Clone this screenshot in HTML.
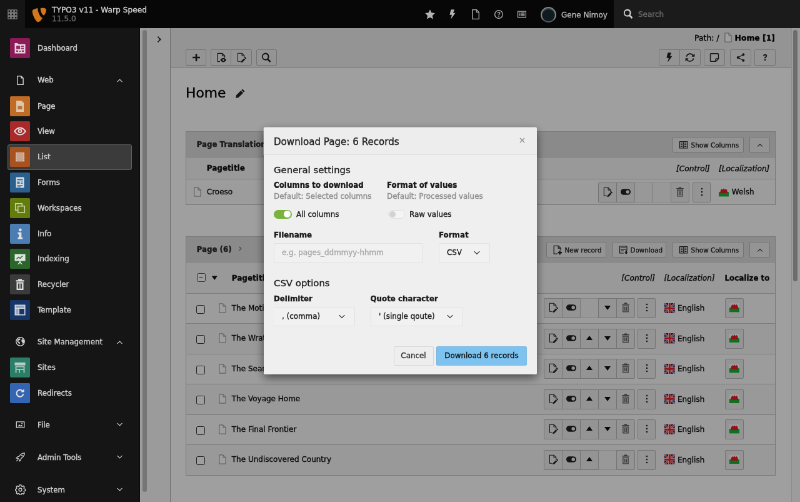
<!DOCTYPE html>
<html lang="en">
<head>
<meta charset="utf-8">
<title>TYPO3 v11 - Warp Speed</title>
<style>
*{box-sizing:border-box;margin:0;padding:0}
html,body{width:800px;height:502px;overflow:hidden;background:#a0a0a0}
body{font-family:"DejaVu Sans","Liberation Sans",sans-serif;font-size:12px;color:#000}
#stage{-webkit-text-stroke:.35px;position:absolute;left:0;top:0;width:1280px;height:804px;transform:scale(.625);transform-origin:0 0;overflow:hidden;will-change:transform}
.abs{position:absolute}
svg{display:block}
/* ---------- topbar ---------- */
#topbar{position:absolute;left:0;top:0;width:1280px;height:45px;background:#070707;color:#fff}
#toggle{position:absolute;left:0;top:0;width:40px;height:45px;background:#151515}
#toggle svg{position:absolute;left:11.6px;top:14.8px}
#logo{position:absolute;left:51px;top:12px}
#sitename{position:absolute;left:83px;top:8.5px;font-size:12.2px;line-height:14.6px;color:#d2d2d2;white-space:nowrap}
#sitename span{display:block;color:#6e6e6e}
.tbi{position:absolute;top:15px}
#user{position:absolute;left:898px;top:16.6px;font-size:12px;color:#b8b8b8;white-space:nowrap}
#avatar{position:absolute;left:865px;top:10.5px;width:25px;height:25px;border-radius:50%;background:#101b20;border:2px solid #7d878b;border-bottom-color:#4f595d;box-shadow:inset 0 2px 0 rgba(200,210,215,.25)}
#search{position:absolute;left:982px;top:0;width:298px;height:45px;background:#1b1b1b}
#search svg{position:absolute;left:15px;top:14px}
#search span{position:absolute;left:39px;top:16px;color:#6a6a6a;font-size:12px}
/* ---------- sidebar ---------- */
#side{position:absolute;left:0;top:45px;width:223.5px;height:760px;background:#151515;color:#fff}
.mi{position:absolute;left:16px;width:32px;height:32px;border-radius:2px;overflow:hidden}
.ml{position:absolute;left:60px;font-size:11.8px;color:#d2d2d2;white-space:nowrap;line-height:16px}
.mg{position:absolute;left:24px}
.mc{position:absolute;left:185px}
#active{position:absolute;left:11.8px;top:186px;width:199.5px;height:41px;background:#3b3b3b;border:1px solid #626262;border-radius:3px}
#sbtrack{position:absolute;left:223.5px;top:45px;width:12px;height:760px;background:#f8f8f8;border-left:1.5px solid #fff}
#sbthumb{position:absolute;left:227.6px;top:48px;width:7px;height:739px;background:#bdbdbd;border-radius:3.5px}
/* ---------- tree collapsed ---------- */
#tree{position:absolute;left:235.5px;top:45px;width:37px;height:760px;background:#f8f8f8;border-right:1px solid #b4b4b4}
#tree svg{position:absolute;left:13.2px;top:11.8px}
/* ---------- content ---------- */
#doc{position:absolute;left:272.5px;top:45px;width:994px;height:63.5px;background:#eee;border-bottom:1px solid #c3c3c3}
#body{position:absolute;left:272.5px;top:108.5px;width:994px;height:700px;background:#fff}
#rsb{position:absolute;left:1266.4px;top:45px;width:14px;height:760px;background:#fbfbfb;border-left:1px solid #e2e2e2}
#rsbt{position:absolute;left:1269.3px;top:48px;width:7px;height:402px;background:#adadad;border-radius:3.5px}
.btn{position:absolute;height:26px;background:#eee;border:1px solid #bbb;border-radius:2px}
.btn svg{position:absolute;left:50%;top:50%;transform:translate(-50%,-50%)}
#path{position:absolute;right:40px;top:52.2px;font-size:12.4px;white-space:nowrap;line-height:16px}
#path b{font-weight:bold}
#path svg{display:inline-block;vertical-align:-3px;margin:0 3px 0 2px}
h1{position:absolute;left:297px;top:134.6px;font-size:21.8px;font-weight:normal;line-height:28px}
#pencil{position:absolute;left:375.5px;top:140.5px}
/* panels */
.panel{position:absolute;background:#fafafa}
.pb{position:absolute;left:0;top:0;width:100%;height:100%;border:1px solid #c2c2c2}
.band{position:absolute;left:0;width:100%}
.hl{position:absolute;left:0;width:100%;height:1px;background:#c9c9c9}
.sb{position:absolute;background:#eee;border:1px solid #bbb;border-radius:2px;font-size:10.4px;white-space:nowrap;color:#222}
.sb svg{position:absolute}
.sb span{position:absolute;line-height:16px}
.t{position:absolute;font-size:12px;white-space:nowrap;line-height:16px;color:#111}
.th{font-weight:bold}
.ht{color:#2a2a2a}
.it{font-style:italic}
.bg{position:absolute;height:32px;display:flex}
.b{width:30px;height:32px;background:#eee;border:1px solid #bbb;margin-left:-1px;position:relative}
.b:first-child{margin-left:0;border-radius:2px 0 0 2px}
.b:last-child{border-radius:0 2px 2px 0}
.b.e{background:#f4f4f4;border-color:#d9d9d9 #c4c4c4}
.b svg{position:absolute;left:6px;top:6px}
.b1{position:absolute;height:32px;background:#eee;border:1px solid #bbb;border-radius:2px}
.b1>svg{position:absolute;left:50%;top:50%;margin:-9px 0 0 -8px}
.b1>svg.flag{margin:0}
.cb{position:absolute;width:14px;height:14px;border:1.6px solid #333;border-radius:2.5px;background:#fff}
.fi{position:absolute}
.flag{position:absolute}
/* overlay + modal */
#ov{position:absolute;left:223px;top:45px;width:1057px;height:760px;background:rgba(0,0,0,.375)}
#modal{position:absolute;left:422px;top:204px;width:437px;height:394.6px;background:#efefef;border-radius:2px;box-shadow:0 5px 15px rgba(0,0,0,.55);color:#1a1a1a}
#mh{position:absolute;left:0;top:0;width:100%;height:44px;border-bottom:1px solid #dcdcdc;background:#ededed;border-radius:2px 2px 0 0}
#mh div{position:absolute;left:16px;top:12.8px;font-size:15.1px;line-height:20px;white-space:nowrap;color:#222}
#mx{position:absolute;left:409px;top:15.6px}
.mt{position:absolute;white-space:nowrap;line-height:16px;font-size:11.9px}
.mt.h{font-size:14.9px;line-height:20px;color:#222}
.mt.bd{font-weight:bold;font-size:11.85px}
.mt.g{color:#8f8f8f}
.inp{position:absolute;height:31px;background:#f1f1f1;border:1px solid #e2e2e2;border-radius:2px}
.inp span{position:absolute;left:12px;top:6px;font-size:11.9px;line-height:16px;white-space:nowrap}
.inp svg{position:absolute;top:8px}
.mb{position:absolute;top:228px;height:31px;border-radius:2px;font-size:11.9px;line-height:29px;text-align:center;white-space:nowrap}
</style>
</head>
<body>
<div id="stage">
<div id="topbar">
<div id="toggle"><svg width="16" height="16" viewBox="0 0 16 16" fill="#8c8c8c" color="#8c8c8c" ><rect x="0.9" y="0.9" width="3.8" height="3.8" fill="none" stroke="currentColor" stroke-width="1.1"/><rect x="0.9" y="6.1000000000000005" width="3.8" height="3.8" fill="none" stroke="currentColor" stroke-width="1.1"/><rect x="0.9" y="11.3" width="3.8" height="3.8" fill="none" stroke="currentColor" stroke-width="1.1"/><rect x="6.1000000000000005" y="0.9" width="3.8" height="3.8" fill="none" stroke="currentColor" stroke-width="1.1"/><rect x="6.1000000000000005" y="6.1000000000000005" width="3.8" height="3.8" fill="none" stroke="currentColor" stroke-width="1.1"/><rect x="6.1000000000000005" y="11.3" width="3.8" height="3.8" fill="none" stroke="currentColor" stroke-width="1.1"/><rect x="11.3" y="0.9" width="3.8" height="3.8" fill="none" stroke="currentColor" stroke-width="1.1"/><rect x="11.3" y="6.1000000000000005" width="3.8" height="3.8" fill="none" stroke="currentColor" stroke-width="1.1"/><rect x="11.3" y="11.3" width="3.8" height="3.8" fill="none" stroke="currentColor" stroke-width="1.1"/></svg></div>
<div id="logo"><svg width="23" height="24" viewBox="0 0 23 24"><path fill="#d4771b" d="M17.4 16.3c-.3.1-.6.1-.9.1-2.9 0-7.1-10.1-7.1-13.4 0-1.2.3-1.6.7-2C6.6 1.4 2.5 2.7 1.2 4.3.9 4.7.7 5.4.7 6.2.7 11.4 6.3 23.3 10.2 23.3c1.8 0 4.9-3 7.2-7zM15.7.7c3.6 0 7.3.6 7.3 2.6 0 4.1-2.6 9.1-3.9 9.1-2.4 0-5.4-6.7-5.4-10 0-1.5.600-1.7 2-1.7z"/></svg></div>
<div id="sitename">TYPO3 v11 - Warp Speed<span>11.5.0</span></div>
<div class="tbi" style="left:680px"><svg width="16" height="16" viewBox="0 0 16 16" fill="#b4b4b4" color="#b4b4b4" ><path d="M8 .2l2.4 5.1 5.5.7-4 3.9 1 5.5L8 12.7l-4.9 2.7 1-5.5-4-3.9 5.5-.7z"/></svg></div>
<div class="tbi" style="left:716px"><svg width="16" height="16" viewBox="0 0 16 16" fill="#b4b4b4" color="#b4b4b4" ><path d="M5.5 .3h5.6L8.9 5.8h3.6L5.2 15.8l1.7-7.1H3.4z"/></svg></div>
<div class="tbi" style="left:753px"><svg width="16" height="16" viewBox="0 0 16 16" fill="#b4b4b4" color="#b4b4b4" ><path d="M2.7 .7h6.8l3.8 3.8v10.8H2.7z" fill="none" stroke="currentColor" stroke-width="1.3"/><path d="M9.3 .9v3.8h3.8" fill="none" stroke="currentColor" stroke-width="1.1"/></svg></div>
<div class="tbi" style="left:790px"><svg width="16" height="16" viewBox="0 0 16 16" fill="#b4b4b4" color="#b4b4b4" ><path fill-rule="evenodd" d="M8 1a7 7 0 110 14A7 7 0 018 1zm0 1.3a5.7 5.7 0 100 11.4A5.7 5.7 0 008 2.3z"/><path d="M5.7 6.3C5.7 4.9 6.7 4 8.1 4c1.4 0 2.4.8 2.4 2 0 1.9-1.9 1.8-1.9 3.3H7.3c0-2 1.8-2 1.8-3.2 0-.6-.4-.9-1-.9-.7 0-1.1.4-1.1 1.1zM7.2 10.3h1.5v1.5H7.2z"/></svg></div>
<div class="tbi" style="left:827px"><svg width="16" height="16" viewBox="0 0 16 16" fill="#b4b4b4" color="#b4b4b4" ><path fill-rule="evenodd" d="M1 2.5h14v11H1z M2.2 3.7v8.6h11.6V3.7z"/><path d="M3.5 5h2v1.5h-2zM6.5 5h6v1.5h-6zM3.5 7.3h2v1.5h-2zM6.5 7.3h6v1.5h-6zM3.5 9.6h2v1.5h-2zM6.5 9.6h6v1.5h-6z"/></svg></div>
<div id="avatar"></div><div id="user">Gene Nimoy</div>
<div id="search"><svg width="16" height="16" viewBox="0 0 16 16" fill="#d0d0d0" color="#d0d0d0" ><path fill-rule="evenodd" d="M6.6 .6a6 6 0 014.9 9.5l4 4-1.8 1.8-4-4A6 6 0 116.6 .6zm0 2.1a3.9 3.9 0 100 7.8 3.9 3.9 0 000-7.8z"/></svg><span>Search</span></div>
</div>
<div id="side">
<div id="active"></div>
<div class="mi" style="top:15.8px"><svg width="32" height="32" viewBox="0 0 32 32"><rect width="32" height="32" fill="#8b1b57"/><path fill="#e6d3de" d="M7.5 8h4.5l1.5 1.5H24.5V24.5H7.5z"/><path fill="#8b1b57" d="M10 12h6v5.5h-6zM17.5 12h4.5v2h-4.5zM17.5 15.5h4.5v2h-4.5zM10 19.5h3v2.5h-3zM14.5 20.5h3v1.5h-3zM19 19.5h3v2.5h-3z" opacity=".9"/></svg></div><div class="ml" style="top:23.8px">Dashboard</div>
<div class="mi" style="top:108.6px"><svg width="32" height="32" viewBox="0 0 32 32"><rect width="32" height="32" fill="#c06b26"/><path fill="#dcc9b0" d="M10 7h8.5l3.5 3.5V25H10z"/><path fill="#c9b79f" d="M18.5 7l3.5 3.5h-3.5z"/><path fill="#b9743a" d="M12.5 15.5h7v5.5h-7z"/></svg></div><div class="ml" style="top:116.6px">Page</div>
<div class="mi" style="top:149.4px"><svg width="32" height="32" viewBox="0 0 32 32"><rect width="32" height="32" fill="#a82b2b"/><path fill="#ecdcdc" fill-rule="evenodd" d="M16 9.5c4.7 0 8.3 3.7 9.8 6.5-1.5 2.8-5.1 6.5-9.8 6.5S7.7 18.8 6.2 16c1.5-2.8 5.1-6.5 9.8-6.5zm0 1.9c-3.4 0-6.2 2.6-7.5 4.6 1.3 2 4.1 4.6 7.5 4.6s6.2-2.6 7.5-4.6c-1.3-2-4.1-4.6-7.5-4.6z"/><circle cx="16" cy="15.6" r="3.3" fill="#ecdcdc"/><circle cx="16" cy="15.6" r="1.4" fill="#a82b2b"/></svg></div><div class="ml" style="top:157.4px">View</div>
<div class="mi" style="top:190.2px"><svg width="32" height="32" viewBox="0 0 32 32"><rect width="32" height="32" fill="#a8531f"/><path fill="#c9a48d" d="M9 8.5h14v15H9z"/><path fill="#f0e4dc" d="M9 10.5h1.6v1.6H9zM9 14h1.6v1.6H9zM9 17.5h1.6v1.6H9zM9 21h1.6v1.6H9zM21.4 10.5H23v1.6h-1.6zM21.4 14H23v1.6h-1.6zM21.4 17.5H23v1.6h-1.6zM21.4 21H23v1.6h-1.6z" opacity=".85"/></svg></div><div class="ml" style="top:198.2px">List</div>
<div class="mi" style="top:231.0px"><svg width="32" height="32" viewBox="0 0 32 32"><rect width="32" height="32" fill="#2a5f8e"/><path fill="#d5dde4" d="M9.5 7.5h13v17h-13z"/><path fill="#2a5f8e" d="M11.5 10h9v2.5h-9zM11.5 14.5h4v3.5h-4zM17 14.5h3.5v1.3H17zM17 16.8h3.5v1.3H17zM11.5 20h9v1.3h-9zM11.5 22.3h6v1.2h-6z" opacity=".8"/></svg></div><div class="ml" style="top:239.0px">Forms</div>
<div class="mi" style="top:271.8px"><svg width="32" height="32" viewBox="0 0 32 32"><rect width="32" height="32" fill="#637c0e"/><path fill="none" stroke="#cdd5a8" stroke-width="1.5" d="M8.7 8.7h10.6v10.6H8.7z"/><path fill="#637c0e" stroke="#cdd5a8" stroke-width="1.5" d="M12.7 12.7h10.6v10.6H12.7z"/></svg></div><div class="ml" style="top:279.8px">Workspaces</div>
<div class="mi" style="top:312.6px"><svg width="32" height="32" viewBox="0 0 32 32"><rect width="32" height="32" fill="#4b7db3"/><circle cx="16.3" cy="9.8" r="2.4" fill="#e4e4e4"/><path fill="#e4e4e4" d="M12.5 13.8h5.8v8h1.8v2.6h-7.6v-2.6h1.8v-5.4h-1.8z"/></svg></div><div class="ml" style="top:320.6px">Info</div>
<div class="mi" style="top:353.4px"><svg width="32" height="32" viewBox="0 0 32 32"><rect width="32" height="32" fill="#2c652c"/><path fill="#dfe6df" d="M7.5 8.5h17v11h-17z"/><path fill="none" stroke="#2c652c" stroke-width="1.5" d="M10.5 16.5l3.2-3 2.3 1.7 4.5-4"/><path fill="#dfe6df" d="M15.1 19.5h1.8v1.8l3.2 3.4h-2.2l-1.9-2-1.9 2h-2.2l3.2-3.4z"/></svg></div><div class="ml" style="top:361.4px">Indexing</div>
<div class="mi" style="top:394.2px"><svg width="32" height="32" viewBox="0 0 32 32"><rect width="32" height="32" fill="#3b3b3b"/><path fill="#e4e4e4" d="M13 7.5h6v1.8h3.5v2.2h-13V9.3H13zM10.5 12.5h11V25h-11z"/><path fill="#3b3b3b" d="M12.8 14.5h1.3v8.3h-1.3zM15.350 14.5h1.3v8.3h-1.3zM17.9 14.5h1.3v8.3h-1.3z"/></svg></div><div class="ml" style="top:402.2px">Recycler</div>
<div class="mi" style="top:435.0px"><svg width="32" height="32" viewBox="0 0 32 32"><rect width="32" height="32" fill="#163667"/><path fill="#d3d9e2" d="M7.5 7.5h17v17h-17z"/><path fill="#163667" d="M9 9h14v3.5H9z" opacity=".35"/><path fill="#163667" d="M15 14h8v9h-8z"/><path fill="#163667" d="M9 14h4.5v9H9z" opacity=".3"/></svg></div><div class="ml" style="top:443.0px">Template</div>
<div class="mi" style="top:527.0px"><svg width="32" height="32" viewBox="0 0 32 32"><rect width="32" height="32" fill="#2b7d68"/><path fill="#b4cfc7" d="M7.5 8h17v4.5h-17z"/><path fill="#b4cfc7" fill-rule="evenodd" d="M8.5 13.5h15V24.5h-15z M10.5 15.5v2.5h11v-2.5zM10.5 20v4.5h3.5V20zM16 20v4.5h5.5V20z" opacity=".85"/></svg></div><div class="ml" style="top:535.0px">Sites</div>
<div class="mi" style="top:567.8px"><svg width="32" height="32" viewBox="0 0 32 32"><rect width="32" height="32" fill="#3465b2"/><path fill="none" stroke="#e4e4e4" stroke-width="2" d="M21.4 17.3a5.5 5.5 0 11-1.6-5.1"/><path fill="#e4e4e4" d="M22.6 9.2v5.4h-5.4z"/></svg></div><div class="ml" style="top:575.8px">Redirects</div>
<div class="mg" style="top:74.5px"><svg width="17" height="17" viewBox="0 0 16 16"><path fill="#d0d0d0" fill-rule="evenodd" d="M3 1h6.5L13 4.5V15H3z M4.3 2.3v11.4h7.4V5.2H8.8V2.3z"/></svg></div><div class="ml" style="top:75.3px">Web</div>
<div class="mc" style="top:77.0px"><svg width="13" height="13" viewBox="0 0 16 16" fill="#c8c8c8" color="#c8c8c8" ><path d="M2.5 10.8L8 5.3l5.5 5.5-1 1L8 7.3l-4.5 4.5z"/></svg></div>
<div class="mg" style="top:493.3px"><svg width="17" height="17" viewBox="0 0 16 16"><path fill="#d0d0d0" fill-rule="evenodd" d="M8 1a7 7 0 110 14A7 7 0 018 1zm0 1.3a5.7 5.7 0 100 11.4A5.7 5.7 0 008 2.3z"/><path fill="#d0d0d0" d="M4 4.5l3-1.5 1.5 1-1 1.5-2 .5-.500 2 2 .5.5 2-1 1.5-2-2.5-1.5-2zM10 5l2.5-.5 1.5 3-1 3-1.5 1-.500-2.5-1.5-1.5z"/></svg></div><div class="ml" style="top:494.1px">Site Management</div>
<div class="mc" style="top:495.8px"><svg width="13" height="13" viewBox="0 0 16 16" fill="#c8c8c8" color="#c8c8c8" ><path d="M2.5 10.8L8 5.3l5.5 5.5-1 1L8 7.3l-4.5 4.5z"/></svg></div>
<div class="mg" style="top:625.7px"><svg width="17" height="17" viewBox="0 0 16 16"><path fill="#d0d0d0" fill-rule="evenodd" d="M1.5 3h13v10h-13z M2.8 4.3v7.4h10.4V4.3z"/><path fill="#d0d0d0" d="M3.8 10.7l2.7-3.2 2 2 1.5-1.2 2.2 2.4zM10.5 5.2a1 1 0 110 2 1 1 0 010-2z"/></svg></div><div class="ml" style="top:626.5px">File</div>
<div class="mc" style="top:628.2px"><svg width="13" height="13" viewBox="0 0 16 16" fill="#c8c8c8" color="#c8c8c8" ><path d="M2.5 5.2L8 10.7l5.5-5.5-1-1L8 8.7 3.5 4.2z"/></svg></div>
<div class="mg" style="top:677.7px"><svg width="17" height="17" viewBox="0 0 16 16"><path fill="none" stroke="#d0d0d0" stroke-width="1.2" d="M14.3 1.7c-3.5 0-6.3 1.8-8.3 5.3l-2.5.5-1.5 2 2.5.300 1.7 1.7.300 2.5 2-1.5.500-2.5c3.5-2 5.3-4.8 5.3-8.3zM4.5 11.5l-2.5 2.5"/><circle cx="10.5" cy="5.5" r="1.1" fill="#d0d0d0"/></svg></div><div class="ml" style="top:678.5px">Admin Tools</div>
<div class="mc" style="top:680.2px"><svg width="13" height="13" viewBox="0 0 16 16" fill="#c8c8c8" color="#c8c8c8" ><path d="M2.5 5.2L8 10.7l5.5-5.5-1-1L8 8.7 3.5 4.2z"/></svg></div>
<div class="mg" style="top:729.7px"><svg width="17" height="17" viewBox="0 0 16 16"><path fill="none" stroke="#d0d0d0" stroke-width="1.3" d="M6.8 1.5h2.4l.4 1.8 1.3.6 1.6-1 1.7 1.7-1 1.6.6 1.3 1.8.4v2.4l-1.8.4-.6 1.3 1 1.6-1.7 1.7-1.6-1-1.3.6-.4 1.8H6.8l-.4-1.8-1.3-.6-1.6 1-1.7-1.7 1-1.6-.6-1.3-1.8-.4V7.9l1.8-.4.6-1.3-1-1.6 1.7-1.7 1.6 1 1.3-.6z" transform="translate(0 -.7)"/><circle cx="8" cy="8" r="2.3" fill="none" stroke="#d0d0d0" stroke-width="1.3"/></svg></div><div class="ml" style="top:730.5px">System</div>
<div class="mc" style="top:732.2px"><svg width="13" height="13" viewBox="0 0 16 16" fill="#c8c8c8" color="#c8c8c8" ><path d="M2.5 5.2L8 10.7l5.5-5.5-1-1L8 8.7 3.5 4.2z"/></svg></div>
</div>
<div id="sbtrack"></div><div id="sbthumb"></div>
<div id="tree"><svg width="12" height="12" viewBox="0 0 16 16" fill="#2a2a2a" color="#2a2a2a" ><path d="M4.6 2.3L10.4 8l-5.8 5.7" fill="none" stroke="currentColor" stroke-width="2.3"/></svg></div>
<div id="doc"></div><div id="body"></div><div id="rsb"></div><div id="rsbt"></div>
<div id="path">Path: / <svg width="16" height="16" viewBox="0 0 16 16" fill="#333" color="#333" style="display:inline-block"><path d="M2.9 .9h6.3l3.9 3.9v10.3H2.9z" fill="#fff" stroke="#8a8a8a" stroke-width="1"/><path d="M9 1v4h4" fill="none" stroke="#8a8a8a" stroke-width="1"/></svg><b>Home [1]</b></div>
<div class="btn" style="left:296.8px;top:79px;width:33.6px;"><svg width="16" height="16" viewBox="0 0 16 16" fill="#222" color="#222" ><path d="M6.7 2h2.6v4.7H14v2.6H9.3V14H6.7V9.3H2V6.7h4.7z"/></svg></div>
<div class="btn" style="left:336.8px;top:79px;width:33.6px;border-radius:2px 0 0 2px"><svg width="16" height="16" viewBox="0 0 16 16" fill="#222" color="#222" ><path d="M6 14.6H2.3V1.4h7.4l3.8 3.8v3.2" fill="none" stroke="currentColor" stroke-width="1.3"/><path d="M9.5 1.6v3.8h3.8" fill="none" stroke="currentColor" stroke-width="1.1"/><path fill-rule="evenodd" d="M11.2 8.8c2.3 0 4 1.5 4.8 3.3-.8 1.8-2.5 3.3-4.8 3.3s-4-1.5-4.8-3.3c.8-1.8 2.5-3.3 4.8-3.3zm0 2a1.3 1.3 0 100 2.6 1.3 1.3 0 000-2.6z"/></svg></div>
<div class="btn" style="left:369.4px;top:79px;width:33.6px;border-radius:0 2px 2px 0"><svg width="16" height="16" viewBox="0 0 16 16" fill="#222" color="#222" ><path d="M7 14.3H2.4V1.3h6.8l3.6 3.6v4" fill="none" stroke="currentColor" stroke-width="1.1"/><path d="M9 1.5v3.6h3.6" fill="none" stroke="currentColor" stroke-width="1"/><path d="M14.4 7.3l1.9 1.9-1.3 1.3-1.9-1.9zM12.5 9.2l1.9 1.9-4.3 4.3-3 1 1.1-2.9z"/></svg></div>
<div class="btn" style="left:409.6px;top:79px;width:33.6px;"><svg width="16" height="16" viewBox="0 0 16 16" fill="#222" color="#222" ><path fill-rule="evenodd" d="M6.6 .6a6 6 0 014.9 9.5l4 4-1.8 1.8-4-4A6 6 0 116.6 .6zm0 2.1a3.9 3.9 0 100 7.8 3.9 3.9 0 000-7.8z"/></svg></div>
<div class="btn" style="left:1054.4px;top:79px;width:33.6px;border-radius:2px 0 0 2px"><svg width="16" height="16" viewBox="0 0 16 16" fill="#222" color="#222" ><path d="M5.5 .3h5.6L8.9 5.8h3.6L5.2 15.8l1.7-7.1H3.4z"/></svg></div>
<div class="btn" style="left:1087.0px;top:79px;width:33.6px;border-radius:0 2px 2px 0"><svg width="16" height="16" viewBox="0 0 16 16" fill="#222" color="#222" ><path d="M13.2 5.2A5.8 5.8 0 002.4 6.6M2.8 10.8a5.8 5.8 0 0010.8-1.4" fill="none" stroke="currentColor" stroke-width="1.7"/><path d="M15.4 1.8v5h-5zM.600 14.2v-5h5z"/></svg></div>
<div class="btn" style="left:1126.4px;top:79px;width:33.6px;"><svg width="16" height="16" viewBox="0 0 16 16" fill="#222" color="#222" ><path d="M2.5 1.7h11a1 1 0 011 1v7.6l-4.2 4H2.5a1 1 0 01-1-1V2.7a1 1 0 011-1z" fill="none" stroke="currentColor" stroke-width="1.4"/><path d="M9.8 14v-3.2a1 1 0 011-1h3.4" fill="none" stroke="currentColor" stroke-width="1.3"/></svg></div>
<div class="btn" style="left:1168.0px;top:79px;width:33.6px;"><svg width="16" height="16" viewBox="0 0 16 16" fill="#222" color="#222" ><circle cx="12.3" cy="3.2" r="2"/><circle cx="3.7" cy="8" r="2"/><circle cx="12.3" cy="12.8" r="2"/><path d="M3.7 8l8.6-4.8M3.7 8l8.6 4.8" stroke="currentColor" stroke-width="1.1" fill="none"/></svg></div>
<div class="btn" style="left:1207.2px;top:79px;width:33.6px;"><svg width="16" height="16" viewBox="0 0 16 16" fill="#222" color="#222" ><path d="M5 5.6C5 3.8 6.3 2.6 8.1 2.6c1.8 0 3.1 1 3.1 2.7 0 2.2-2.2 2.3-2.2 4H7c0-2.5 2.1-2.6 2.1-3.9 0-.6-.4-1-1.1-1-.8 0-1.2.5-1.2 1.3zM6.9 10.6h2.2v2.2H6.9z"/></svg></div>
<h1>Home</h1><div id="pencil"><svg width="17" height="17" viewBox="0 0 16 16" fill="#222" color="#222" ><path d="M11.3 1.3l3.4 3.4-1.7 1.7-3.4-3.4zM8.8 3.8l3.4 3.4-6.9 6.9L1 15l.9-4.3z"/></svg></div>
<div class="panel" style="left:297.20px;top:210.16px;width:943.60px;height:118.32px">
<div class="band" style="top:0.00px;height:41.52px;background:#dedede"></div><div class="band" style="top:41.52px;height:34.56px;background:#f5f5f5"></div><div class="band" style="top:76.08px;height:42.24px;background:#fafafa"></div>
<div class="hl" style="top:41.04px"></div><div class="hl" style="top:75.60px"></div>
<div class="t th ht" style="left:17.60px;top:12.96px;font-size:11.8px">Page Translation</div>
<div class="sb" style="left:778.96px;top:9.04px;width:113.60px;height:24.96px"><svg width="15.5" height="15.5" viewBox="0 0 16 16" fill="#222" color="#222" style="left:8.96px;top:12.48px;margin-top:-8.3px"><path fill-rule="evenodd" d="M1 2h14v12H1z M2.2 3.2v9.6h5.2V3.2zM8.6 3.2v9.6h5.2V3.2z"/><path d="M3.2 4.5h3.2v1.3H3.2zM3.2 7.3h3.2v1.3H3.2zM3.2 10.1h3.2v1.3H3.2zM9.6 4.5h3.2v1.3H9.6zM9.6 7.3h3.2v1.3H9.6zM9.6 10.1h3.2v1.3H9.6z"/></svg><span style="left:28.48px;top:12.48px;margin-top:-8.2px">Show Columns</span></div>
<div class="sb" style="left:901.84px;top:9.04px;width:33.28px;height:24.96px"><svg width="12" height="12" viewBox="0 0 16 16" fill="#222" color="#222" style="left:50%;top:50%;margin:-6px 0 0 -6px"><path d="M2.5 10.8L8 5.3l5.5 5.5-1 1L8 7.3l-4.5 4.5z"/></svg></div>
<div class="t th" style="left:33.60px;top:51.13px;font-size:12px">Pagetitle</div>
<div class="t it" style="left:784.80px;top:51.38px;font-size:12.2px">[Control]</div><div class="t it" style="left:852.80px;top:51.41px;font-size:12.1px">[Localization]</div>
<div class="fi" style="left:10.96px;top:88.88px"><svg width="16" height="16" viewBox="0 0 16 16" fill="#333" color="#333" ><path d="M2.9 .9h6.3l3.9 3.9v10.3H2.9z" fill="#fff" stroke="#8a8a8a" stroke-width="1"/><path d="M9 1v4h4" fill="none" stroke="#8a8a8a" stroke-width="1"/></svg></div><div class="t " style="left:33.60px;top:89.05px;font-size:12px">Croeso</div>
<div class="bg" style="left:660.00px;top:81.68px"><div class="b"><svg width="16" height="16" viewBox="0 0 16 16" fill="#222" color="#222" ><path d="M7 14.3H2.4V1.3h6.8l3.6 3.6v4" fill="none" stroke="currentColor" stroke-width="1.1"/><path d="M9 1.5v3.6h3.6" fill="none" stroke="currentColor" stroke-width="1"/><path d="M14.4 7.3l1.9 1.9-1.3 1.3-1.9-1.9zM12.5 9.2l1.9 1.9-4.3 4.3-3 1 1.1-2.9z"/></svg></div><div class="b"><svg width="16" height="16" viewBox="0 0 16 16" fill="#222" color="#222" ><path fill-rule="evenodd" d="M4.8 3.2h6.4a4.8 4.8 0 010 9.6H4.8a4.8 4.8 0 010-9.6zm6.4 2a2.8 2.8 0 100 5.6 2.8 2.8 0 000-5.6z"/></svg></div><div class="b e"></div><div class="b e"></div><div class="b"><svg width="16" height="16" viewBox="0 0 16 16" fill="#5a5a5a" color="#5a5a5a" ><path fill-rule="evenodd" d="M5.8 .5h4.4v1.6h3.6v1.4H2.2V2.1h3.6zM3.2 4.4h9.6v11.1H3.2zM4.5 5.7v8.5h7V5.7z"/><path d="M5.8 6.8h1.1v6.4H5.8zM7.5 6.8h1v6.4h-1zM9.1 6.8h1.1v6.4H9.1z"/></svg></div></div>
<div class="b1" style="left:810.80px;top:81.68px;width:29.28px"><svg width="16" height="16" viewBox="0 0 16 16" fill="#222" color="#222" ><circle cx="8" cy="3" r="1.3"/><circle cx="8" cy="8" r="1.3"/><circle cx="8" cy="13" r="1.3"/></svg></div>
<svg class="flag" style="left:852.56px;top:90.00px" width="16" height="14.4" viewBox="0 0 16 14.4"><rect width="16" height="7.2" fill="#fdfdfd"/><rect y="7.2" width="16" height="7.2" fill="#17b532"/><path fill="#e81a2e" d="M2.2 8.8l.6-4L4.5 2l1.7 1.6L8 1.2l1.4 2.2L11.5 2l2 2.6.4 4.2-2.4.5-1.5-1-2 1.3-2-1.3-1.8 1z"/></svg><div class="t " style="left:873.60px;top:89.05px;font-size:12px">Welsh</div>
<div class="pb"></div></div>
<div class="panel" style="left:297.20px;top:377.60px;width:943.60px;height:383.36px">
<div class="band" style="top:0.00px;height:42.24px;background:#dedede"></div><div class="band" style="top:42.24px;height:49.28px;background:#f5f5f5"></div>
<div class="band" style="top:91.52px;height:48.48px;background:#fafafa"></div>
<div class="band" style="top:140.00px;height:48.48px;background:#f5f5f5"></div>
<div class="band" style="top:188.48px;height:48.48px;background:#fafafa"></div>
<div class="band" style="top:236.96px;height:48.48px;background:#f5f5f5"></div>
<div class="band" style="top:285.44px;height:48.48px;background:#fafafa"></div>
<div class="band" style="top:333.92px;height:49.44px;background:#f5f5f5"></div>
<div class="hl" style="top:41.76px"></div>
<div class="hl" style="top:91.04px"></div>
<div class="hl" style="top:139.52px"></div>
<div class="hl" style="top:188.00px"></div>
<div class="hl" style="top:236.48px"></div>
<div class="hl" style="top:284.96px"></div>
<div class="hl" style="top:333.44px"></div>
<div class="t th ht" style="left:17.60px;top:13.52px;font-size:11.8px">Page (6)</div><svg width="9.5" height="9.5" viewBox="0 0 16 16" fill="#333" color="#333" style="position:absolute;left:83.28px;top:15.84px"><path d="M5.2 2.5L10.7 8l-5.5 5.5-1-1L8.7 8 4.2 3.5z"/></svg>
<div class="sb" style="left:577.20px;top:9.60px;width:95.84px;height:24.64px"><svg width="15.5" height="15.5" viewBox="0 0 16 16" fill="#222" color="#222" style="left:8.96px;top:12.32px;margin-top:-8.3px"><path d="M8 14.6H2.3V1.4h7.4l3.8 3.8v3.4" fill="none" stroke="currentColor" stroke-width="1.3"/><path d="M9.5 1.6v3.8h3.8" fill="none" stroke="currentColor" stroke-width="1.1"/><path d="M11 9h2.2v2.4h2.4v2.2h-2.4V16H11v-2.4H8.6v-2.2H11z"/></svg><span style="left:28.00px;top:12.32px;margin-top:-8.2px">New record</span></div>
<div class="sb" style="left:683.12px;top:9.60px;width:85.92px;height:24.64px"><svg width="15.5" height="15.5" viewBox="0 0 16 16" fill="#222" color="#222" style="left:8.96px;top:12.32px;margin-top:-8.3px"><path fill-rule="evenodd" d="M1 1.5h13V10h-1.2V2.7H2.2v10.1H8V14H1z"/><path d="M3.2 4h8.6v1.2H3.2zM3.2 6.5h8.6v1.2H3.2zM3.2 9h5v1.2h-5zM11 9h2.4v3H15l-2.8 3.5L9.4 12H11z"/></svg><span style="left:27.20px;top:12.32px;margin-top:-8.2px">Download</span></div>
<div class="sb" style="left:778.96px;top:9.60px;width:113.60px;height:24.64px"><svg width="15.5" height="15.5" viewBox="0 0 16 16" fill="#222" color="#222" style="left:8.96px;top:12.32px;margin-top:-8.3px"><path fill-rule="evenodd" d="M1 2h14v12H1z M2.2 3.2v9.6h5.2V3.2zM8.6 3.2v9.6h5.2V3.2z"/><path d="M3.2 4.5h3.2v1.3H3.2zM3.2 7.3h3.2v1.3H3.2zM3.2 10.1h3.2v1.3H3.2zM9.6 4.5h3.2v1.3H9.6zM9.6 7.3h3.2v1.3H9.6zM9.6 10.1h3.2v1.3H9.6z"/></svg><span style="left:28.48px;top:12.32px;margin-top:-8.2px">Show Columns</span></div>
<div class="sb" style="left:901.84px;top:9.60px;width:33.28px;height:24.64px"><svg width="12" height="12" viewBox="0 0 16 16" fill="#222" color="#222" style="left:50%;top:50%;margin:-6px 0 0 -6px"><path d="M2.5 10.8L8 5.3l5.5 5.5-1 1L8 7.3l-4.5 4.5z"/></svg></div>
<div class="cb" style="left:17.84px;top:59.84px;border-color:#555"><svg width="11" height="11" viewBox="0 0 16 16" fill="#333" color="#333" style="position:absolute;left:0;top:0"><path d="M4 7.2h8v1.6H4z"/></svg></div>
<svg width="14.5" height="14.5" viewBox="0 0 16 16" fill="#111" color="#111" style="position:absolute;left:38.48px;top:59.36px"><path d="M8 12L3 5h10z"/></svg>
<div class="t th" style="left:73.60px;top:59.21px;font-size:12px">Pagetitle</div>
<div class="t it" style="left:697.04px;top:59.62px;font-size:12.2px">[Control]</div><div class="t it" style="left:765.20px;top:59.65px;font-size:12.1px">[Localization]</div><div class="t th" style="left:862.32px;top:59.72px;font-size:11.9px">Localize to</div>
<div class="cb" style="left:17.20px;top:110.40px"></div>
<div class="fi" style="left:50.48px;top:107.04px"><svg width="16" height="16" viewBox="0 0 16 16" fill="#333" color="#333" ><path d="M2.9 .9h6.3l3.9 3.9v10.3H2.9z" fill="#fff" stroke="#8a8a8a" stroke-width="1"/><path d="M9 1v4h4" fill="none" stroke="#8a8a8a" stroke-width="1"/></svg></div><div class="t " style="left:73.60px;top:107.37px;font-size:12px">The Motion Picture</div>
<div class="bg" style="left:572.72px;top:99.68px"><div class="b"><svg width="16" height="16" viewBox="0 0 16 16" fill="#222" color="#222" ><path d="M7 14.3H2.4V1.3h6.8l3.6 3.6v4" fill="none" stroke="currentColor" stroke-width="1.1"/><path d="M9 1.5v3.6h3.6" fill="none" stroke="currentColor" stroke-width="1"/><path d="M14.4 7.3l1.9 1.9-1.3 1.3-1.9-1.9zM12.5 9.2l1.9 1.9-4.3 4.3-3 1 1.1-2.9z"/></svg></div><div class="b"><svg width="16" height="16" viewBox="0 0 16 16" fill="#222" color="#222" ><path fill-rule="evenodd" d="M4.8 3.2h6.4a4.8 4.8 0 010 9.6H4.8a4.8 4.8 0 010-9.6zm6.4 2a2.8 2.8 0 100 5.6 2.8 2.8 0 000-5.6z"/></svg></div><div class="b e"></div><div class="b"><svg width="16" height="16" viewBox="0 0 16 16" fill="#111" color="#111" ><path d="M8 12L3 5h10z"/></svg></div><div class="b"><svg width="16" height="16" viewBox="0 0 16 16" fill="#5a5a5a" color="#5a5a5a" ><path fill-rule="evenodd" d="M5.8 .5h4.4v1.6h3.6v1.4H2.2V2.1h3.6zM3.2 4.4h9.6v11.1H3.2zM4.5 5.7v8.5h7V5.7z"/><path d="M5.8 6.8h1.1v6.4H5.8zM7.5 6.8h1v6.4h-1zM9.1 6.8h1.1v6.4H9.1z"/></svg></div></div>
<div class="b1" style="left:722.80px;top:99.68px;width:29.28px"><svg width="16" height="16" viewBox="0 0 16 16" fill="#222" color="#222" ><circle cx="8" cy="3" r="1.3"/><circle cx="8" cy="8" r="1.3"/><circle cx="8" cy="13" r="1.3"/></svg></div>
<svg class="flag" style="left:765.84px;top:107.04px" width="16.6" height="16.4" viewBox="0 0 17 16" preserveAspectRatio="none"><rect width="17" height="16" fill="#1a2376"/><path stroke="#f4f4f4" stroke-width="2.6" d="M0 0l17 16M17 0L0 16"/><path stroke="#f02424" stroke-width="1.1" d="M0 0l17 16M17 0L0 16"/><path stroke="#f4f4f4" stroke-width="4.6" d="M8.5 0v16M0 8h17"/><path stroke="#f02020" stroke-width="3" d="M8.5 0v16M0 8h17"/></svg><div class="t " style="left:786.80px;top:107.53px;font-size:12px">English</div>
<div class="b1" style="left:862.48px;top:99.68px;width:30.08px"><svg class="flag" style="left:5.92px;top:7.20px" width="16" height="14.4" viewBox="0 0 16 14.4"><rect width="16" height="7.2" fill="#fdfdfd"/><rect y="7.2" width="16" height="7.2" fill="#17b532"/><path fill="#e81a2e" d="M2.2 8.8l.6-4L4.5 2l1.7 1.6L8 1.2l1.4 2.2L11.5 2l2 2.6.4 4.2-2.4.5-1.5-1-2 1.3-2-1.3-1.8 1z"/></svg></div>
<div class="cb" style="left:17.20px;top:158.88px"></div>
<div class="fi" style="left:50.48px;top:155.52px"><svg width="16" height="16" viewBox="0 0 16 16" fill="#333" color="#333" ><path d="M2.9 .9h6.3l3.9 3.9v10.3H2.9z" fill="#fff" stroke="#8a8a8a" stroke-width="1"/><path d="M9 1v4h4" fill="none" stroke="#8a8a8a" stroke-width="1"/></svg></div><div class="t " style="left:73.60px;top:155.85px;font-size:12px">The Wrath of Khan</div>
<div class="bg" style="left:572.72px;top:148.16px"><div class="b"><svg width="16" height="16" viewBox="0 0 16 16" fill="#222" color="#222" ><path d="M7 14.3H2.4V1.3h6.8l3.6 3.6v4" fill="none" stroke="currentColor" stroke-width="1.1"/><path d="M9 1.5v3.6h3.6" fill="none" stroke="currentColor" stroke-width="1"/><path d="M14.4 7.3l1.9 1.9-1.3 1.3-1.9-1.9zM12.5 9.2l1.9 1.9-4.3 4.3-3 1 1.1-2.9z"/></svg></div><div class="b"><svg width="16" height="16" viewBox="0 0 16 16" fill="#222" color="#222" ><path fill-rule="evenodd" d="M4.8 3.2h6.4a4.8 4.8 0 010 9.6H4.8a4.8 4.8 0 010-9.6zm6.4 2a2.8 2.8 0 100 5.6 2.8 2.8 0 000-5.6z"/></svg></div><div class="b"><svg width="16" height="16" viewBox="0 0 16 16" fill="#111" color="#111" ><path d="M8 4l5 7H3z"/></svg></div><div class="b"><svg width="16" height="16" viewBox="0 0 16 16" fill="#111" color="#111" ><path d="M8 12L3 5h10z"/></svg></div><div class="b"><svg width="16" height="16" viewBox="0 0 16 16" fill="#5a5a5a" color="#5a5a5a" ><path fill-rule="evenodd" d="M5.8 .5h4.4v1.6h3.6v1.4H2.2V2.1h3.6zM3.2 4.4h9.6v11.1H3.2zM4.5 5.7v8.5h7V5.7z"/><path d="M5.8 6.8h1.1v6.4H5.8zM7.5 6.8h1v6.4h-1zM9.1 6.8h1.1v6.4H9.1z"/></svg></div></div>
<div class="b1" style="left:722.80px;top:148.16px;width:29.28px"><svg width="16" height="16" viewBox="0 0 16 16" fill="#222" color="#222" ><circle cx="8" cy="3" r="1.3"/><circle cx="8" cy="8" r="1.3"/><circle cx="8" cy="13" r="1.3"/></svg></div>
<svg class="flag" style="left:765.84px;top:155.52px" width="16.6" height="16.4" viewBox="0 0 17 16" preserveAspectRatio="none"><rect width="17" height="16" fill="#1a2376"/><path stroke="#f4f4f4" stroke-width="2.6" d="M0 0l17 16M17 0L0 16"/><path stroke="#f02424" stroke-width="1.1" d="M0 0l17 16M17 0L0 16"/><path stroke="#f4f4f4" stroke-width="4.6" d="M8.5 0v16M0 8h17"/><path stroke="#f02020" stroke-width="3" d="M8.5 0v16M0 8h17"/></svg><div class="t " style="left:786.80px;top:156.01px;font-size:12px">English</div>
<div class="b1" style="left:862.48px;top:148.16px;width:30.08px"><svg class="flag" style="left:5.92px;top:7.20px" width="16" height="14.4" viewBox="0 0 16 14.4"><rect width="16" height="7.2" fill="#fdfdfd"/><rect y="7.2" width="16" height="7.2" fill="#17b532"/><path fill="#e81a2e" d="M2.2 8.8l.6-4L4.5 2l1.7 1.6L8 1.2l1.4 2.2L11.5 2l2 2.6.4 4.2-2.4.5-1.5-1-2 1.3-2-1.3-1.8 1z"/></svg></div>
<div class="cb" style="left:17.20px;top:207.36px"></div>
<div class="fi" style="left:50.48px;top:204.00px"><svg width="16" height="16" viewBox="0 0 16 16" fill="#333" color="#333" ><path d="M2.9 .9h6.3l3.9 3.9v10.3H2.9z" fill="#fff" stroke="#8a8a8a" stroke-width="1"/><path d="M9 1v4h4" fill="none" stroke="#8a8a8a" stroke-width="1"/></svg></div><div class="t " style="left:73.60px;top:204.33px;font-size:12px">The Search for Spock</div>
<div class="bg" style="left:572.72px;top:196.64px"><div class="b"><svg width="16" height="16" viewBox="0 0 16 16" fill="#222" color="#222" ><path d="M7 14.3H2.4V1.3h6.8l3.6 3.6v4" fill="none" stroke="currentColor" stroke-width="1.1"/><path d="M9 1.5v3.6h3.6" fill="none" stroke="currentColor" stroke-width="1"/><path d="M14.4 7.3l1.9 1.9-1.3 1.3-1.9-1.9zM12.5 9.2l1.9 1.9-4.3 4.3-3 1 1.1-2.9z"/></svg></div><div class="b"><svg width="16" height="16" viewBox="0 0 16 16" fill="#222" color="#222" ><path fill-rule="evenodd" d="M4.8 3.2h6.4a4.8 4.8 0 010 9.6H4.8a4.8 4.8 0 010-9.6zm6.4 2a2.8 2.8 0 100 5.6 2.8 2.8 0 000-5.6z"/></svg></div><div class="b"><svg width="16" height="16" viewBox="0 0 16 16" fill="#111" color="#111" ><path d="M8 4l5 7H3z"/></svg></div><div class="b"><svg width="16" height="16" viewBox="0 0 16 16" fill="#111" color="#111" ><path d="M8 12L3 5h10z"/></svg></div><div class="b"><svg width="16" height="16" viewBox="0 0 16 16" fill="#5a5a5a" color="#5a5a5a" ><path fill-rule="evenodd" d="M5.8 .5h4.4v1.6h3.6v1.4H2.2V2.1h3.6zM3.2 4.4h9.6v11.1H3.2zM4.5 5.7v8.5h7V5.7z"/><path d="M5.8 6.8h1.1v6.4H5.8zM7.5 6.8h1v6.4h-1zM9.1 6.8h1.1v6.4H9.1z"/></svg></div></div>
<div class="b1" style="left:722.80px;top:196.64px;width:29.28px"><svg width="16" height="16" viewBox="0 0 16 16" fill="#222" color="#222" ><circle cx="8" cy="3" r="1.3"/><circle cx="8" cy="8" r="1.3"/><circle cx="8" cy="13" r="1.3"/></svg></div>
<svg class="flag" style="left:765.84px;top:204.00px" width="16.6" height="16.4" viewBox="0 0 17 16" preserveAspectRatio="none"><rect width="17" height="16" fill="#1a2376"/><path stroke="#f4f4f4" stroke-width="2.6" d="M0 0l17 16M17 0L0 16"/><path stroke="#f02424" stroke-width="1.1" d="M0 0l17 16M17 0L0 16"/><path stroke="#f4f4f4" stroke-width="4.6" d="M8.5 0v16M0 8h17"/><path stroke="#f02020" stroke-width="3" d="M8.5 0v16M0 8h17"/></svg><div class="t " style="left:786.80px;top:204.49px;font-size:12px">English</div>
<div class="b1" style="left:862.48px;top:196.64px;width:30.08px"><svg class="flag" style="left:5.92px;top:7.20px" width="16" height="14.4" viewBox="0 0 16 14.4"><rect width="16" height="7.2" fill="#fdfdfd"/><rect y="7.2" width="16" height="7.2" fill="#17b532"/><path fill="#e81a2e" d="M2.2 8.8l.6-4L4.5 2l1.7 1.6L8 1.2l1.4 2.2L11.5 2l2 2.6.4 4.2-2.4.5-1.5-1-2 1.3-2-1.3-1.8 1z"/></svg></div>
<div class="cb" style="left:17.20px;top:255.84px"></div>
<div class="fi" style="left:50.48px;top:252.48px"><svg width="16" height="16" viewBox="0 0 16 16" fill="#333" color="#333" ><path d="M2.9 .9h6.3l3.9 3.9v10.3H2.9z" fill="#fff" stroke="#8a8a8a" stroke-width="1"/><path d="M9 1v4h4" fill="none" stroke="#8a8a8a" stroke-width="1"/></svg></div><div class="t " style="left:73.60px;top:252.81px;font-size:12px">The Voyage Home</div>
<div class="bg" style="left:572.72px;top:245.12px"><div class="b"><svg width="16" height="16" viewBox="0 0 16 16" fill="#222" color="#222" ><path d="M7 14.3H2.4V1.3h6.8l3.6 3.6v4" fill="none" stroke="currentColor" stroke-width="1.1"/><path d="M9 1.5v3.6h3.6" fill="none" stroke="currentColor" stroke-width="1"/><path d="M14.4 7.3l1.9 1.9-1.3 1.3-1.9-1.9zM12.5 9.2l1.9 1.9-4.3 4.3-3 1 1.1-2.9z"/></svg></div><div class="b"><svg width="16" height="16" viewBox="0 0 16 16" fill="#222" color="#222" ><path fill-rule="evenodd" d="M4.8 3.2h6.4a4.8 4.8 0 010 9.6H4.8a4.8 4.8 0 010-9.6zm6.4 2a2.8 2.8 0 100 5.6 2.8 2.8 0 000-5.6z"/></svg></div><div class="b"><svg width="16" height="16" viewBox="0 0 16 16" fill="#111" color="#111" ><path d="M8 4l5 7H3z"/></svg></div><div class="b"><svg width="16" height="16" viewBox="0 0 16 16" fill="#111" color="#111" ><path d="M8 12L3 5h10z"/></svg></div><div class="b"><svg width="16" height="16" viewBox="0 0 16 16" fill="#5a5a5a" color="#5a5a5a" ><path fill-rule="evenodd" d="M5.8 .5h4.4v1.6h3.6v1.4H2.2V2.1h3.6zM3.2 4.4h9.6v11.1H3.2zM4.5 5.7v8.5h7V5.7z"/><path d="M5.8 6.8h1.1v6.4H5.8zM7.5 6.8h1v6.4h-1zM9.1 6.8h1.1v6.4H9.1z"/></svg></div></div>
<div class="b1" style="left:722.80px;top:245.12px;width:29.28px"><svg width="16" height="16" viewBox="0 0 16 16" fill="#222" color="#222" ><circle cx="8" cy="3" r="1.3"/><circle cx="8" cy="8" r="1.3"/><circle cx="8" cy="13" r="1.3"/></svg></div>
<svg class="flag" style="left:765.84px;top:252.48px" width="16.6" height="16.4" viewBox="0 0 17 16" preserveAspectRatio="none"><rect width="17" height="16" fill="#1a2376"/><path stroke="#f4f4f4" stroke-width="2.6" d="M0 0l17 16M17 0L0 16"/><path stroke="#f02424" stroke-width="1.1" d="M0 0l17 16M17 0L0 16"/><path stroke="#f4f4f4" stroke-width="4.6" d="M8.5 0v16M0 8h17"/><path stroke="#f02020" stroke-width="3" d="M8.5 0v16M0 8h17"/></svg><div class="t " style="left:786.80px;top:252.97px;font-size:12px">English</div>
<div class="b1" style="left:862.48px;top:245.12px;width:30.08px"><svg class="flag" style="left:5.92px;top:7.20px" width="16" height="14.4" viewBox="0 0 16 14.4"><rect width="16" height="7.2" fill="#fdfdfd"/><rect y="7.2" width="16" height="7.2" fill="#17b532"/><path fill="#e81a2e" d="M2.2 8.8l.6-4L4.5 2l1.7 1.6L8 1.2l1.4 2.2L11.5 2l2 2.6.4 4.2-2.4.5-1.5-1-2 1.3-2-1.3-1.8 1z"/></svg></div>
<div class="cb" style="left:17.20px;top:304.32px"></div>
<div class="fi" style="left:50.48px;top:300.96px"><svg width="16" height="16" viewBox="0 0 16 16" fill="#333" color="#333" ><path d="M2.9 .9h6.3l3.9 3.9v10.3H2.9z" fill="#fff" stroke="#8a8a8a" stroke-width="1"/><path d="M9 1v4h4" fill="none" stroke="#8a8a8a" stroke-width="1"/></svg></div><div class="t " style="left:73.60px;top:301.29px;font-size:12px">The Final Frontier</div>
<div class="bg" style="left:572.72px;top:293.60px"><div class="b"><svg width="16" height="16" viewBox="0 0 16 16" fill="#222" color="#222" ><path d="M7 14.3H2.4V1.3h6.8l3.6 3.6v4" fill="none" stroke="currentColor" stroke-width="1.1"/><path d="M9 1.5v3.6h3.6" fill="none" stroke="currentColor" stroke-width="1"/><path d="M14.4 7.3l1.9 1.9-1.3 1.3-1.9-1.9zM12.5 9.2l1.9 1.9-4.3 4.3-3 1 1.1-2.9z"/></svg></div><div class="b"><svg width="16" height="16" viewBox="0 0 16 16" fill="#222" color="#222" ><path fill-rule="evenodd" d="M4.8 3.2h6.4a4.8 4.8 0 010 9.6H4.8a4.8 4.8 0 010-9.6zm6.4 2a2.8 2.8 0 100 5.6 2.8 2.8 0 000-5.6z"/></svg></div><div class="b"><svg width="16" height="16" viewBox="0 0 16 16" fill="#111" color="#111" ><path d="M8 4l5 7H3z"/></svg></div><div class="b"><svg width="16" height="16" viewBox="0 0 16 16" fill="#111" color="#111" ><path d="M8 12L3 5h10z"/></svg></div><div class="b"><svg width="16" height="16" viewBox="0 0 16 16" fill="#5a5a5a" color="#5a5a5a" ><path fill-rule="evenodd" d="M5.8 .5h4.4v1.6h3.6v1.4H2.2V2.1h3.6zM3.2 4.4h9.6v11.1H3.2zM4.5 5.7v8.5h7V5.7z"/><path d="M5.8 6.8h1.1v6.4H5.8zM7.5 6.8h1v6.4h-1zM9.1 6.8h1.1v6.4H9.1z"/></svg></div></div>
<div class="b1" style="left:722.80px;top:293.60px;width:29.28px"><svg width="16" height="16" viewBox="0 0 16 16" fill="#222" color="#222" ><circle cx="8" cy="3" r="1.3"/><circle cx="8" cy="8" r="1.3"/><circle cx="8" cy="13" r="1.3"/></svg></div>
<svg class="flag" style="left:765.84px;top:300.96px" width="16.6" height="16.4" viewBox="0 0 17 16" preserveAspectRatio="none"><rect width="17" height="16" fill="#1a2376"/><path stroke="#f4f4f4" stroke-width="2.6" d="M0 0l17 16M17 0L0 16"/><path stroke="#f02424" stroke-width="1.1" d="M0 0l17 16M17 0L0 16"/><path stroke="#f4f4f4" stroke-width="4.6" d="M8.5 0v16M0 8h17"/><path stroke="#f02020" stroke-width="3" d="M8.5 0v16M0 8h17"/></svg><div class="t " style="left:786.80px;top:301.45px;font-size:12px">English</div>
<div class="b1" style="left:862.48px;top:293.60px;width:30.08px"><svg class="flag" style="left:5.92px;top:7.20px" width="16" height="14.4" viewBox="0 0 16 14.4"><rect width="16" height="7.2" fill="#fdfdfd"/><rect y="7.2" width="16" height="7.2" fill="#17b532"/><path fill="#e81a2e" d="M2.2 8.8l.6-4L4.5 2l1.7 1.6L8 1.2l1.4 2.2L11.5 2l2 2.6.4 4.2-2.4.5-1.5-1-2 1.3-2-1.3-1.8 1z"/></svg></div>
<div class="cb" style="left:17.20px;top:352.80px"></div>
<div class="fi" style="left:50.48px;top:349.44px"><svg width="16" height="16" viewBox="0 0 16 16" fill="#333" color="#333" ><path d="M2.9 .9h6.3l3.9 3.9v10.3H2.9z" fill="#fff" stroke="#8a8a8a" stroke-width="1"/><path d="M9 1v4h4" fill="none" stroke="#8a8a8a" stroke-width="1"/></svg></div><div class="t " style="left:73.60px;top:349.77px;font-size:12px">The Undiscovered Country</div>
<div class="bg" style="left:572.72px;top:342.08px"><div class="b"><svg width="16" height="16" viewBox="0 0 16 16" fill="#222" color="#222" ><path d="M7 14.3H2.4V1.3h6.8l3.6 3.6v4" fill="none" stroke="currentColor" stroke-width="1.1"/><path d="M9 1.5v3.6h3.6" fill="none" stroke="currentColor" stroke-width="1"/><path d="M14.4 7.3l1.9 1.9-1.3 1.3-1.9-1.9zM12.5 9.2l1.9 1.9-4.3 4.3-3 1 1.1-2.9z"/></svg></div><div class="b"><svg width="16" height="16" viewBox="0 0 16 16" fill="#222" color="#222" ><path fill-rule="evenodd" d="M4.8 3.2h6.4a4.8 4.8 0 010 9.6H4.8a4.8 4.8 0 010-9.6zm6.4 2a2.8 2.8 0 100 5.6 2.8 2.8 0 000-5.6z"/></svg></div><div class="b"><svg width="16" height="16" viewBox="0 0 16 16" fill="#111" color="#111" ><path d="M8 4l5 7H3z"/></svg></div><div class="b e"></div><div class="b"><svg width="16" height="16" viewBox="0 0 16 16" fill="#5a5a5a" color="#5a5a5a" ><path fill-rule="evenodd" d="M5.8 .5h4.4v1.6h3.6v1.4H2.2V2.1h3.6zM3.2 4.4h9.6v11.1H3.2zM4.5 5.7v8.5h7V5.7z"/><path d="M5.8 6.8h1.1v6.4H5.8zM7.5 6.8h1v6.4h-1zM9.1 6.8h1.1v6.4H9.1z"/></svg></div></div>
<div class="b1" style="left:722.80px;top:342.08px;width:29.28px"><svg width="16" height="16" viewBox="0 0 16 16" fill="#222" color="#222" ><circle cx="8" cy="3" r="1.3"/><circle cx="8" cy="8" r="1.3"/><circle cx="8" cy="13" r="1.3"/></svg></div>
<svg class="flag" style="left:765.84px;top:349.44px" width="16.6" height="16.4" viewBox="0 0 17 16" preserveAspectRatio="none"><rect width="17" height="16" fill="#1a2376"/><path stroke="#f4f4f4" stroke-width="2.6" d="M0 0l17 16M17 0L0 16"/><path stroke="#f02424" stroke-width="1.1" d="M0 0l17 16M17 0L0 16"/><path stroke="#f4f4f4" stroke-width="4.6" d="M8.5 0v16M0 8h17"/><path stroke="#f02020" stroke-width="3" d="M8.5 0v16M0 8h17"/></svg><div class="t " style="left:786.80px;top:349.93px;font-size:12px">English</div>
<div class="b1" style="left:862.48px;top:342.08px;width:30.08px"><svg class="flag" style="left:5.92px;top:7.20px" width="16" height="14.4" viewBox="0 0 16 14.4"><rect width="16" height="7.2" fill="#fdfdfd"/><rect y="7.2" width="16" height="7.2" fill="#17b532"/><path fill="#e81a2e" d="M2.2 8.8l.6-4L4.5 2l1.7 1.6L8 1.2l1.4 2.2L11.5 2l2 2.6.4 4.2-2.4.5-1.5-1-2 1.3-2-1.3-1.8 1z"/></svg></div>
<div class="pb"></div></div>
<div id="ov"></div>
<div id="modal">
<div id="mh"><div>Download Page: 6 Records</div></div>
<svg id="mx" width="9" height="9" viewBox="0 0 9 9"><path d="M1 1l7 7M8 1L1 8" stroke="#8a8a8a" stroke-width="1.3" fill="none"/></svg>
<div class="mt h" style="left:16px;top:58px">General settings</div>
<div class="mt bd" style="left:16px;top:84px">Columns to download</div>
<div class="mt g" style="left:16px;top:101.5px">Default: Selected columns</div>
<div class="mt bd" style="left:197px;top:84px">Format of values</div>
<div class="mt g" style="left:197px;top:101.5px">Default: Processed values</div>
<div class="abs" style="left:15.8px;top:131.8px;width:29px;height:14px;border-radius:7px;background:#7ab23e"><div class="abs" style="right:1.5px;top:1.5px;width:11px;height:11px;border-radius:50%;background:#fff"></div></div>
<div class="mt " style="left:52px;top:131px">All columns</div>
<div class="abs" style="left:198.5px;top:132px;width:27px;height:14px;border-radius:7px;background:#f4f4f4;border:1px solid #e2e2e2"><div class="abs" style="left:1px;top:1px;width:10px;height:10px;border-radius:50%;background:#d2d2d2"></div></div>
<div class="mt " style="left:233px;top:131px">Raw values</div>
<div class="mt bd" style="left:16px;top:164px">Filename</div>
<div class="mt bd" style="left:280px;top:164px">Format</div>
<div class="inp" style="left:16px;top:184.8px;width:239px"><span style="color:#a9a9a9">e.g. pages_ddmmyy-hhmm</span></div>
<div class="inp" style="left:280px;top:184.8px;width:82px"><span>CSV</span><svg width="14" height="14" viewBox="0 0 16 16" fill="#333" color="#333" style="left:53.0px"><path d="M2.5 5.2L8 10.7l5.5-5.5-1-1L8 8.7 3.5 4.2z"/></svg></div>
<div class="mt h" style="left:16px;top:239.2px">CSV options</div>
<div class="mt bd" style="left:16px;top:266px">Delimiter</div>
<div class="mt bd" style="left:170.5px;top:266px">Quote character</div>
<div class="inp" style="left:16px;top:287px;width:130px;border-left-color:transparent"><span>, (comma)</span><svg width="14" height="14" viewBox="0 0 16 16" fill="#333" color="#333" style="left:101.3px"><path d="M2.5 5.2L8 10.7l5.5-5.5-1-1L8 8.7 3.5 4.2z"/></svg></div>
<div class="inp" style="left:171px;top:287px;width:147.5px"><span>' (single qoute)</span><svg width="14" height="14" viewBox="0 0 16 16" fill="#333" color="#333" style="left:118.8px"><path d="M2.5 5.2L8 10.7l5.5-5.5-1-1L8 8.7 3.5 4.2z"/></svg></div>
<div class="mb" style="left:207.5px;top:350px;width:64px;background:#eee;border:1px solid #d6d6d6;color:#333">Cancel</div>
<div class="mb" style="left:276px;top:350px;width:145px;background:#7ec3f0;border:1px solid #6db4e4;color:#111">Download 6 records</div>
</div>
</div>
</body>
</html>
